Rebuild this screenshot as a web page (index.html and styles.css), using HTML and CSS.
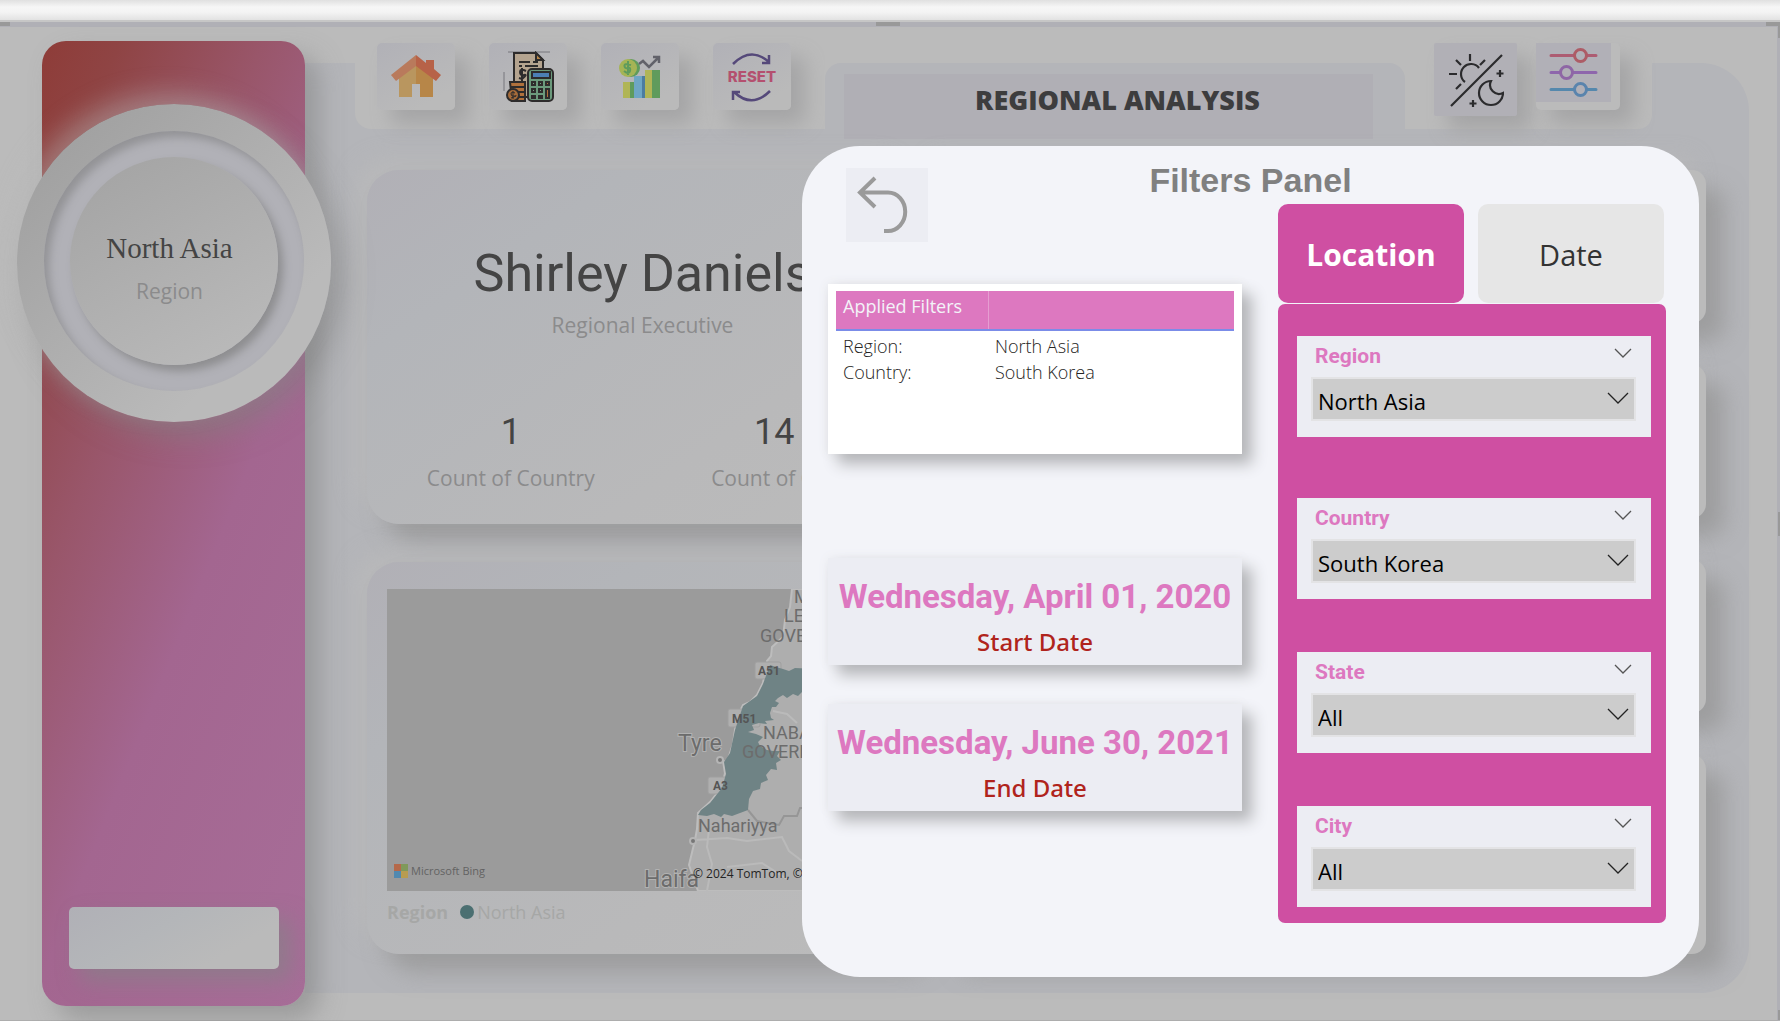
FILE: index.html
```html
<!DOCTYPE html>
<html lang="en">
<head>
<meta charset="utf-8">
<title>Regional Analysis</title>
<link rel="stylesheet" href="styles.css">
</head>
<body>
<div class="strip"></div>
<div class="frame">
  <span class="handle handle-tl"></span><span class="handle handle-tc"></span><span class="handle handle-tr"></span>
  <span class="handle handle-trv"></span><span class="handle handle-r"></span><span class="handle handle-br"></span>

  <aside class="sidebar">
    <div class="dial"><div class="dial-ring"><div class="dial-face">
      <span class="dial-value">North Asia</span>
      <span class="dial-label">Region</span>
    </div></div></div>
    <div class="sidebar-box"></div>
  </aside>

  <main class="main">
    <header class="header">
      <nav class="notch notch-left">
        <button class="tile" aria-label="Home">
          <svg width="52" height="46" viewBox="0 0 52 46"><path d="M9 22 26 8 43 22V43H30V30H22V43H9Z" fill="#b9965f"/><path d="M26 8 43 22V43H30V30H26Z" fill="#b78648"/><path d="M26 1 1 21 6 27 26 12Z" fill="#b97a5c"/><path d="M26 1 36 9V6H44V15L51 21 46 27 26 12Z" fill="#b76248"/></svg>
        </button>
        <button class="tile" aria-label="Finance">
          <svg width="52" height="52" viewBox="0 0 52 52" stroke="#2e2c2c" stroke-width="2"><path d="M6 1H48M2 21V40" stroke-width="1" stroke="#77777c"/><path d="M12 2H34L41 9V46H12Z" fill="#b5a48f"/><path d="M34 2V9H41Z" fill="#b78648"/><path d="M17 11H28M31 11H36M17 15H20M23 15H36" fill="none"/><path d="M24 20Q18 17 18 21T22 24 20 28L17 27M20 17V30" fill="none"/><rect x="26" y="18" width="25" height="32" rx="4" fill="#6b9a7c"/><rect x="30" y="21" width="18" height="6" fill="#4c7fb5"/><path d="M30 31h3v3h-3zM37 31h3v3h-3zM44 31h3v3h-3zM30 38h3v3h-3zM37 38h3v3h-3zM30 45h3v2h-3zM37 45h3v2h-3z" fill="#7a9f88"/><path d="M44 38h3v9h-3zM44 31h3v3h-3z" fill="#b0713c"/><path d="M8 31H23V50H10ZM8 36H23M8 41H23M10 46H23" fill="#b0713c"/><circle cx="11" cy="44" r="6" fill="#a56b3a"/><path d="M13 42Q9 40 9 43T13 45 9 47M11 40V48" fill="none" stroke-width="1"/></svg>
        </button>
        <button class="tile" aria-label="Sales">
          <svg width="44" height="44" viewBox="0 0 44 44"><path d="M5 27H12V43H5Z" fill="#b0b556"/><path d="M12 27H16V43H12Z" fill="#5f9b5c"/><path d="M16 21H24V43H16Z" fill="#6ea6c4"/><path d="M24 21H27V43H24Z" fill="#4c7da0"/><path d="M27 15H34V43H27Z" fill="#b0b556"/><path d="M34 15H42V43H34Z" fill="#5f9b5c"/><circle cx="13" cy="13" r="9" fill="#5f9b5c"/><circle cx="10" cy="13" r="9" fill="#a5b455"/><path d="M13 10Q6 8 6.500 11T10 13 12 16 6 16M10 6V20" fill="none" stroke="#5f9b5c" stroke-width="2"/><path d="M21 9 25 6 31 12 40 3M35 2H41V8" fill="none" stroke="#62626a" stroke-width="2.500"/></svg>
        </button>
        <button class="tile" aria-label="Reset">
          <svg width="50" height="50" viewBox="0 0 50 50"><path d="M6 12Q24-6 42 10M42 3V11H35" fill="none" stroke="#55497a" stroke-width="2.500"/><path d="M43 39Q25 57 7 40M6 48V40H13" fill="none" stroke="#55497a" stroke-width="2.500"/><text x="25" y="30" text-anchor="middle" class="reset-word">RESET</text></svg>
        </button>
      </nav>
      <div class="tab-back"><div class="tab-shape"><h1 class="page-title">REGIONAL ANALYSIS</h1></div></div>
      <div class="notch notch-right">
        <button class="tile tile-theme" aria-label="Theme">
          <svg width="56" height="56" viewBox="0 0 56 56" fill="none" stroke="#2b2b2d" stroke-width="2.200"><path d="M3 54 54 3M17 30A10 10 0 1 1 31 16M22 2V9M8 8 13 13M1 22H9M8 37 13 32M32 13 37 8"/><path d="M43 29A12 12 0 1 0 55 41 9 9 0 0 1 43 29Z"/><path d="M52 18V25M48.500 21.500H55.500M25 48V55M21.500 51.500H28.500"/></svg>
        </button>
        <button class="tile tile-filter" aria-label="Filters">
          <svg width="75" height="59" viewBox="0 0 75 59" fill="none" stroke-width="3"><rect width="75" height="59" fill="#b1b0b7"/><g stroke-linecap="round"><path d="M15 12.500H38M51 12.500H60" stroke="#ad5c72"/><path d="M15 29.500H24M37 29.500H60" stroke="#8e66ac"/><path d="M15 46.500H38M51 46.500H60" stroke="#5588ad"/></g><circle cx="44.500" cy="12.500" r="6" stroke="#ad5c66"/><circle cx="30.500" cy="29.500" r="6" stroke="#8e66a5"/><circle cx="44.500" cy="46.500" r="6" stroke="#5a84ad"/></svg>
        </button>
      </div>
    </header>

    <div class="board">
      <div class="col">
        <section class="card profile">
          <h2 class="name">Shirley Daniels</h2>
          <p class="caption">Regional Executive</p>
          <div class="stats">
            <div><p class="stat">1</p><p class="caption">Count of Country</p></div>
            <div><p class="stat">14</p><p class="caption">Count of City</p></div>
          </div>
        </section>
        <section class="card map-card">
          <svg class="map" viewBox="0 0 511 302" preserveAspectRatio="xMinYMin slice" role="img" aria-label="Map">
            <rect width="511" height="302" fill="#9b9b9b"/>
            <path d="M405 0 403 18 398 31 396 48 385 58 384 67 380 72 376 94 370 106 363 113 356 116 351 126 348 141 346 155 343 164 340 173 336 172 338 184 335 198 323 213 311 224 310 240 308 251 302 276 311 302H511V0Z" fill="#aeaeae" stroke="#bdbdbd" stroke-width="2"/>
            <path d="M308 251 340 249 360 252 395 248 402 262 415 272M322 240 320 258 325 275 320 302M340 278 375 274 400 290M386 122 400 125 410 134" fill="none" stroke="#bababa" stroke-width="2"/>
            <path d="M361 221 370 232 392 236 397 227H410L413 219H430" fill="none" stroke="#969696" stroke-width="2"/>
            <g class="shield"><rect x="368" y="73" width="26" height="17" rx="2"/><rect x="341" y="120" width="32" height="18" rx="2"/><rect x="321" y="188" width="26" height="17" rx="2"/></g>
            <path d="M383 76 389 78 396 80 402 82 408 79 430 80V100L415 103 411 107 406 105 400 109 396 106 391 109 388 112 392 114 389 118 385 118 383 124 384 129 387 131 378 132 380 135 372 134 365 136 367 141 361 143 369 145 376 148 371 153 373 157 380 161 386 162 393 162 390 167 394 171 389 174 390 181 384 180 379 186 381 191 374 194 373 200 366 202 362 210 361 221 345 227 337 225 334 228 327 225 320 227 311 226 314 221 323 214 335 199 339 185 337 173 343 164 348 141 356 117 370 107 376 95Z" fill="#6f8385"/>
            <g class="shield-text"><text x="371" y="86">A51</text><text x="345" y="134">M51</text><text x="326" y="201">A3</text></g>
            <g class="map-area"><text x="407" y="14">M</text><text x="397" y="33">LEBANON</text><text x="373" y="53">GOVERNORATE</text><text x="376" y="150">NABATIEH</text><text x="355" y="169">GOVERNORATE</text><text x="311" y="243">Nahariyya</text></g>
            <g class="map-city"><text x="291" y="162">Tyre</text><text x="257" y="298">Haifa</text></g>
            <g fill="#777" stroke="#b5b5b5" stroke-width="2"><circle cx="333" cy="171" r="3"/><circle cx="306" cy="252" r="3"/></g>
            <path d="M7 275h7v7h-7z" fill="#b5694a"/><path d="M14 275h7v7h-7z" fill="#80995a"/><path d="M7 282h7v7h-7z" fill="#5189b0"/><path d="M14 282h7v7h-7z" fill="#b89c51"/>
            <text class="map-bing" x="24" y="286">Microsoft Bing</text>
            <text class="map-copy" x="306" y="289">© 2024 TomTom, © 2024 Microsoft</text>
          </svg>
          <p class="legend"><b>Region</b><i class="dot"></i><span>North Asia</span></p>
        </section>
      </div>
      <div class="col col-right">
        <section class="card mini"></section>
        <section class="card mini"></section>
        <section class="card mini"></section>
        <section class="card mini mini-last"></section>
      </div>
    </div>
  </main>

  <section class="panel" aria-labelledby="panel-title">
    <button class="back" aria-label="Back">
      <svg width="52" height="60" viewBox="0 0 52 60" fill="none" stroke="#9a9a9a" stroke-width="4"><path d="M18 2 3 16.500 18 31M3 16.500H31A17 19 0 0 1 31 55H27"/></svg>
    </button>
    <h2 class="panel-title" id="panel-title">Filters Panel</h2>
    <div class="panel-left">
      <div class="applied">
        <table>
          <thead><tr><th>Applied Filters</th><th></th></tr></thead>
          <tbody><tr><td>Region:</td><td>North Asia</td></tr><tr><td>Country:</td><td>South Korea</td></tr></tbody>
        </table>
      </div>
      <div class="date-card"><p class="date">Wednesday, April 01, 2020</p><p class="date-label">Start Date</p></div>
      <div class="date-card"><p class="date">Wednesday, June 30, 2021</p><p class="date-label">End Date</p></div>
    </div>
    <div class="panel-right">
      <div class="tabs">
        <button class="tab tab-on">Location</button>
        <button class="tab">Date</button>
      </div>
      <div class="slicers">
        <div class="slicer slicer-lead">
          <div class="slicer-head"><label for="region">Region</label><svg class="chev" viewBox="0 0 18 10"><path d="M1 1 9 9 17 1"/></svg></div>
          <div class="pick"><select id="region"><option>North Asia</option></select><svg class="chev chev-big" viewBox="0 0 22 12"><path d="M1 1 11 11 21 1"/></svg></div>
        </div>
        <div class="slicer">
          <div class="slicer-head"><label for="country">Country</label><svg class="chev" viewBox="0 0 18 10"><path d="M1 1 9 9 17 1"/></svg></div>
          <div class="pick"><select id="country"><option>South Korea</option></select><svg class="chev chev-big" viewBox="0 0 22 12"><path d="M1 1 11 11 21 1"/></svg></div>
        </div>
        <div class="slicer">
          <div class="slicer-head"><label for="state">State</label><svg class="chev" viewBox="0 0 18 10"><path d="M1 1 9 9 17 1"/></svg></div>
          <div class="pick"><select id="state"><option>All</option></select><svg class="chev chev-big" viewBox="0 0 22 12"><path d="M1 1 11 11 21 1"/></svg></div>
        </div>
        <div class="slicer">
          <div class="slicer-head"><label for="city">City</label><svg class="chev" viewBox="0 0 18 10"><path d="M1 1 9 9 17 1"/></svg></div>
          <div class="pick"><select id="city"><option>All</option></select><svg class="chev chev-big" viewBox="0 0 22 12"><path d="M1 1 11 11 21 1"/></svg></div>
        </div>
      </div>
    </div>
  </section>
</div>
</body>
</html>
```
FILE: styles.css
```css
* { box-sizing: border-box; }
body { margin: 0; min-height: 100vh; display: flex; flex-direction: column; background: #bbb; font-family: "Open Sans", "Noto Sans", sans-serif; }
h1, h2, p { margin: 0; font-weight: 400; }
button { border: 0; padding: 0; margin: 0; font: inherit; color: inherit; cursor: pointer; }
svg { display: block; }

.strip { height: 20px; background: linear-gradient(#e0e0e0, #f6f6f6 35%, #f4f4f4 60%, #e2e2e2); }
.frame { position: relative; flex: 1; display: flex; padding: 14px 28px 14px 42px; border-top: 5px solid #b0b0b6; border-right: 3px solid #b0b0b6; box-shadow: 0 -2px 0 #c6c6c6; margin-top: 2px; border-bottom: 1px solid #adadad; }
.handle { position: absolute; background: #999; }
.handle-tl { left: 0; top: -5px; width: 10px; height: 4px; }
.handle-tc { left: 876px; top: -5px; width: 24px; height: 4px; }
.handle-tr { right: -3px; top: -5px; width: 14px; height: 4px; }
.handle-trv { right: -3px; top: -5px; width: 2px; height: 16px; }
.handle-r { right: -3px; top: 485px; width: 2px; height: 24px; }
.handle-br { right: -3px; bottom: 0; width: 2px; height: 10px; }

.sidebar { position: relative; z-index: 1; flex: none; width: 263px; min-height: 965px; border-radius: 24px; display: flex; flex-direction: column; align-items: center; justify-content: space-between; padding: 63px 0 37px; background: linear-gradient(112deg, #8e3c38 0%, #8f4444 12%, #99566a 34%, #a36690 58%, #a76d98 100%); box-shadow: 14px 14px 24px rgba(125, 125, 125, .5); }
.dial { flex: none; width: 314px; height: 318px; border-radius: 50%; padding: 27px; background: linear-gradient(135deg, #a2a2a2 15%, #bababa 75%); box-shadow: -8px -12px 24px rgba(187, 187, 187, .4), 12px 14px 28px rgba(130, 130, 130, .55); }
.dial-ring { height: 260px; border-radius: 50%; padding: 26px; background: #b1b1b7; box-shadow: inset 5px 6px 9px #939396; }
.dial-face { height: 208px; border-radius: 50%; background: linear-gradient(150deg, #a5a5a5 10%, #b8b8b8 85%); box-shadow: 5px 6px 9px #8e8e90; display: flex; flex-direction: column; align-items: center; padding: 74px 8px 0 0; }
.dial-value { font: 29px/34px "Liberation Serif", serif; color: #444; }
.dial-label { font-size: 21px; line-height: 28px; margin-top: 12px; color: #8b8b8c; }
.sidebar-box { width: 210px; height: 62px; border-radius: 5px; background: linear-gradient(150deg, #b0b0b6, #b4b6b9 40%, #bababa 75%); box-shadow: 12px 12px 22px rgba(135, 128, 135, .7); }

.main { position: relative; z-index: 0; flex: 1; align-self: flex-start; min-width: 0; margin-top: -14px; padding-left: 50px; }
.main::before { content: ""; position: absolute; z-index: -1; inset: 36px 0 0 0; background: #b4b5b9; border-radius: 0 48px 48px 0; }
.header { display: flex; height: 102px; padding-right: 97px; }
.notch { background: #bbb; display: flex; align-items: flex-start; padding-top: 16px; }
.notch-left { width: 470px; padding-left: 22px; gap: 34px; border-radius: 0 0 0 16px; }
.notch-right { width: 247px; padding-left: 29px; gap: 19px; border-radius: 0 0 14px 0; }
.tile { flex: none; width: 78px; height: 67px; border-radius: 5px; display: grid; place-items: center; background: linear-gradient(150deg, #b1b1b7, #bababa 80%); box-shadow: 14px 14px 20px #a5a5a6; }
.reset-word { font: 800 15px Inter, sans-serif; fill: #b4506f; }
.tile-theme { width: 83px; height: 73px; background: #b1b0b6; border-radius: 2px; }
.tile-filter { width: 84px; place-items: start; background: #bbb; }
.tab-back { flex: 1; background: #bbb; padding-top: 36px; }
.tab-shape { height: 76px; border-radius: 16px 16px 0 0; background: #b4b5b9; padding: 11px 32px 0 19px; }
.page-title { height: 65px; background: #b0afb5; text-align: center; color: #3d3d3e; font: 800 27px/52px "Open Sans", sans-serif; padding-left: 18px; }

.board { display: grid; grid-template-columns: 551fr 764fr; gap: 24px; padding: 41px 43px 39px 12px; }
.col { display: flex; flex-direction: column; gap: 38px; min-width: 0; }
.col-right { gap: 42px; }
.card { border-radius: 32px; background: linear-gradient(145deg, #b1b0b6, #b3b5b9 25%, #b9b9ba 70%, #bbb); box-shadow: 18px 18px 22px rgba(150, 150, 150, .75), -12px -12px 20px rgba(187, 187, 187, .6); }
.mini { height: 153px; border-radius: 14px; background: #bbb; }
.mini-last { height: 199px; }
.profile { height: 354px; text-align: center; padding-top: 72px; }
.name { font: 52px/64px Roboto, sans-serif; color: #444; }
.caption { font-size: 21px; line-height: 28px; color: #8b8b8c; white-space: nowrap; }
.name + .caption { margin-top: 5px; }
.stats { display: grid; grid-template-columns: 1fr 1fr; padding: 0 12px; margin-top: 72px; }
.stat { font: 36px/42px Roboto, sans-serif; color: #444; margin-bottom: 11px; }
.map-card { height: 392px; padding: 27px 20px 0; }
.map { width: 100%; height: 302px; }
.map-area, .map-city { font: 18px Roboto, sans-serif; fill: #6c6c6c; stroke: #b2b2b2; stroke-width: 2px; paint-order: stroke; }
.map-area { stroke-width: 0; }
.map-city { font-size: 23px; }
.shield { fill: #afafaf; stroke: #9f9f9f; }
.shield-text { font: 700 12px Roboto, sans-serif; fill: #555; }
.map-bing { font-size: 11px; fill: #636363; }
.map-copy { font-size: 12px; fill: #242424; }
.legend { display: flex; align-items: center; font-size: 18px; line-height: 24px; color: #a6a7a6; margin-top: 9px; }
.dot { width: 14px; height: 14px; border-radius: 50%; background: #4b6f71; margin: 0 3px 0 12px; }

.panel { position: absolute; z-index: 2; top: 119px; left: 802px; right: 78px; min-height: 831px; border-radius: 58px; background: #f3f4f9; display: grid; grid-template-columns: 414px 388px; grid-template-rows: 58px auto; justify-content: space-between; padding: 0 33px 54px 26px; }
.back { grid-area: 1 / 1; width: 82px; height: 74px; margin: 22px 0 0 18px; background: #ecedf3; display: grid; place-items: center start; padding: 2px 0 0 11px; }
.panel-title { grid-area: 1 / 1 / 2 / 3; text-align: center; color: #808080; font: 700 34px/40px "Liberation Sans", sans-serif; padding: 14px 0 0 7px; pointer-events: none; }
.panel-left { grid-area: 2 / 1; padding-top: 80px; }
.panel-right { grid-area: 2 / 2; }
.applied { height: 170px; background: #fff; padding: 7px 8px; margin-bottom: 104px; box-shadow: 10px 10px 14px #b5b6b9, 0 0 10px #e3e4e7; }
table { width: 100%; border-collapse: collapse; font-size: 18px; line-height: 26px; color: #252423; table-layout: fixed; }
th { height: 39px; padding: 0 7px; vertical-align: top; text-align: left; font-weight: 400; line-height: 30px; color: #f3f3f8; background: #dd78c0; border-bottom: 2px solid #7b8ce8; }
th:first-child { width: 152px; border-right: 1px solid #e69dd1; }
td { padding: 0 7px; font-weight: 300; }
tbody tr:first-child td { padding-top: 2px; }
.date-card { height: 107px; background: #ecedf3; text-align: center; white-space: nowrap; padding-top: 17px; box-shadow: 10px 10px 14px #b5b6b9, 0 0 10px #e8e9ed; }
.date-card + .date-card { margin-top: 39px; }
.date { font: 700 33px/44px Roboto, sans-serif; color: #dd78c0; }
.date-label { font: 500 24px/32px "Noto Sans", sans-serif; margin-top: 7px; color: #b0241c; }
.tabs { display: grid; grid-template-columns: 186px 186px; gap: 14px; height: 99px; }
.tab { border-radius: 10px; background: #e6e6e6; color: #333; font-size: 29px; padding-top: 2px; }
.tab-on { background: #cf4fa2; color: #fff; font-size: 30px; font-weight: 700; }
.slicers { margin-top: 1px; height: 619px; border-radius: 7px; background: #cf4fa2; padding: 32px 15px 15px 19px; }
.slicer { height: 101px; background: #ecedf3; padding: 6px 15px 0 14px; margin-bottom: 53px; }
.slicer-lead { margin-bottom: 61px; }
.slicer-head { display: flex; justify-content: space-between; height: 35px; padding: 0 4px; }
.slicer-head label { font: 700 21px/28px Roboto, sans-serif; color: #dd78c0; }
.chev { width: 18px; height: 10px; margin-top: 6px; fill: none; stroke: #555; stroke-width: 1.300px; }
.pick { display: grid; align-items: center; }
.pick > * { grid-area: 1 / 1; }
.pick select { width: 100%; height: 44px; appearance: none; background: #ccc; border: 2px solid #e3e3e5; border-radius: 0; font: 22px "Open Sans", sans-serif; color: #000; padding: 3px 5px 0; }
.chev-big { width: 22px; height: 12px; margin: 0 7px 2px; justify-self: end; stroke: #222; pointer-events: none; }
```
